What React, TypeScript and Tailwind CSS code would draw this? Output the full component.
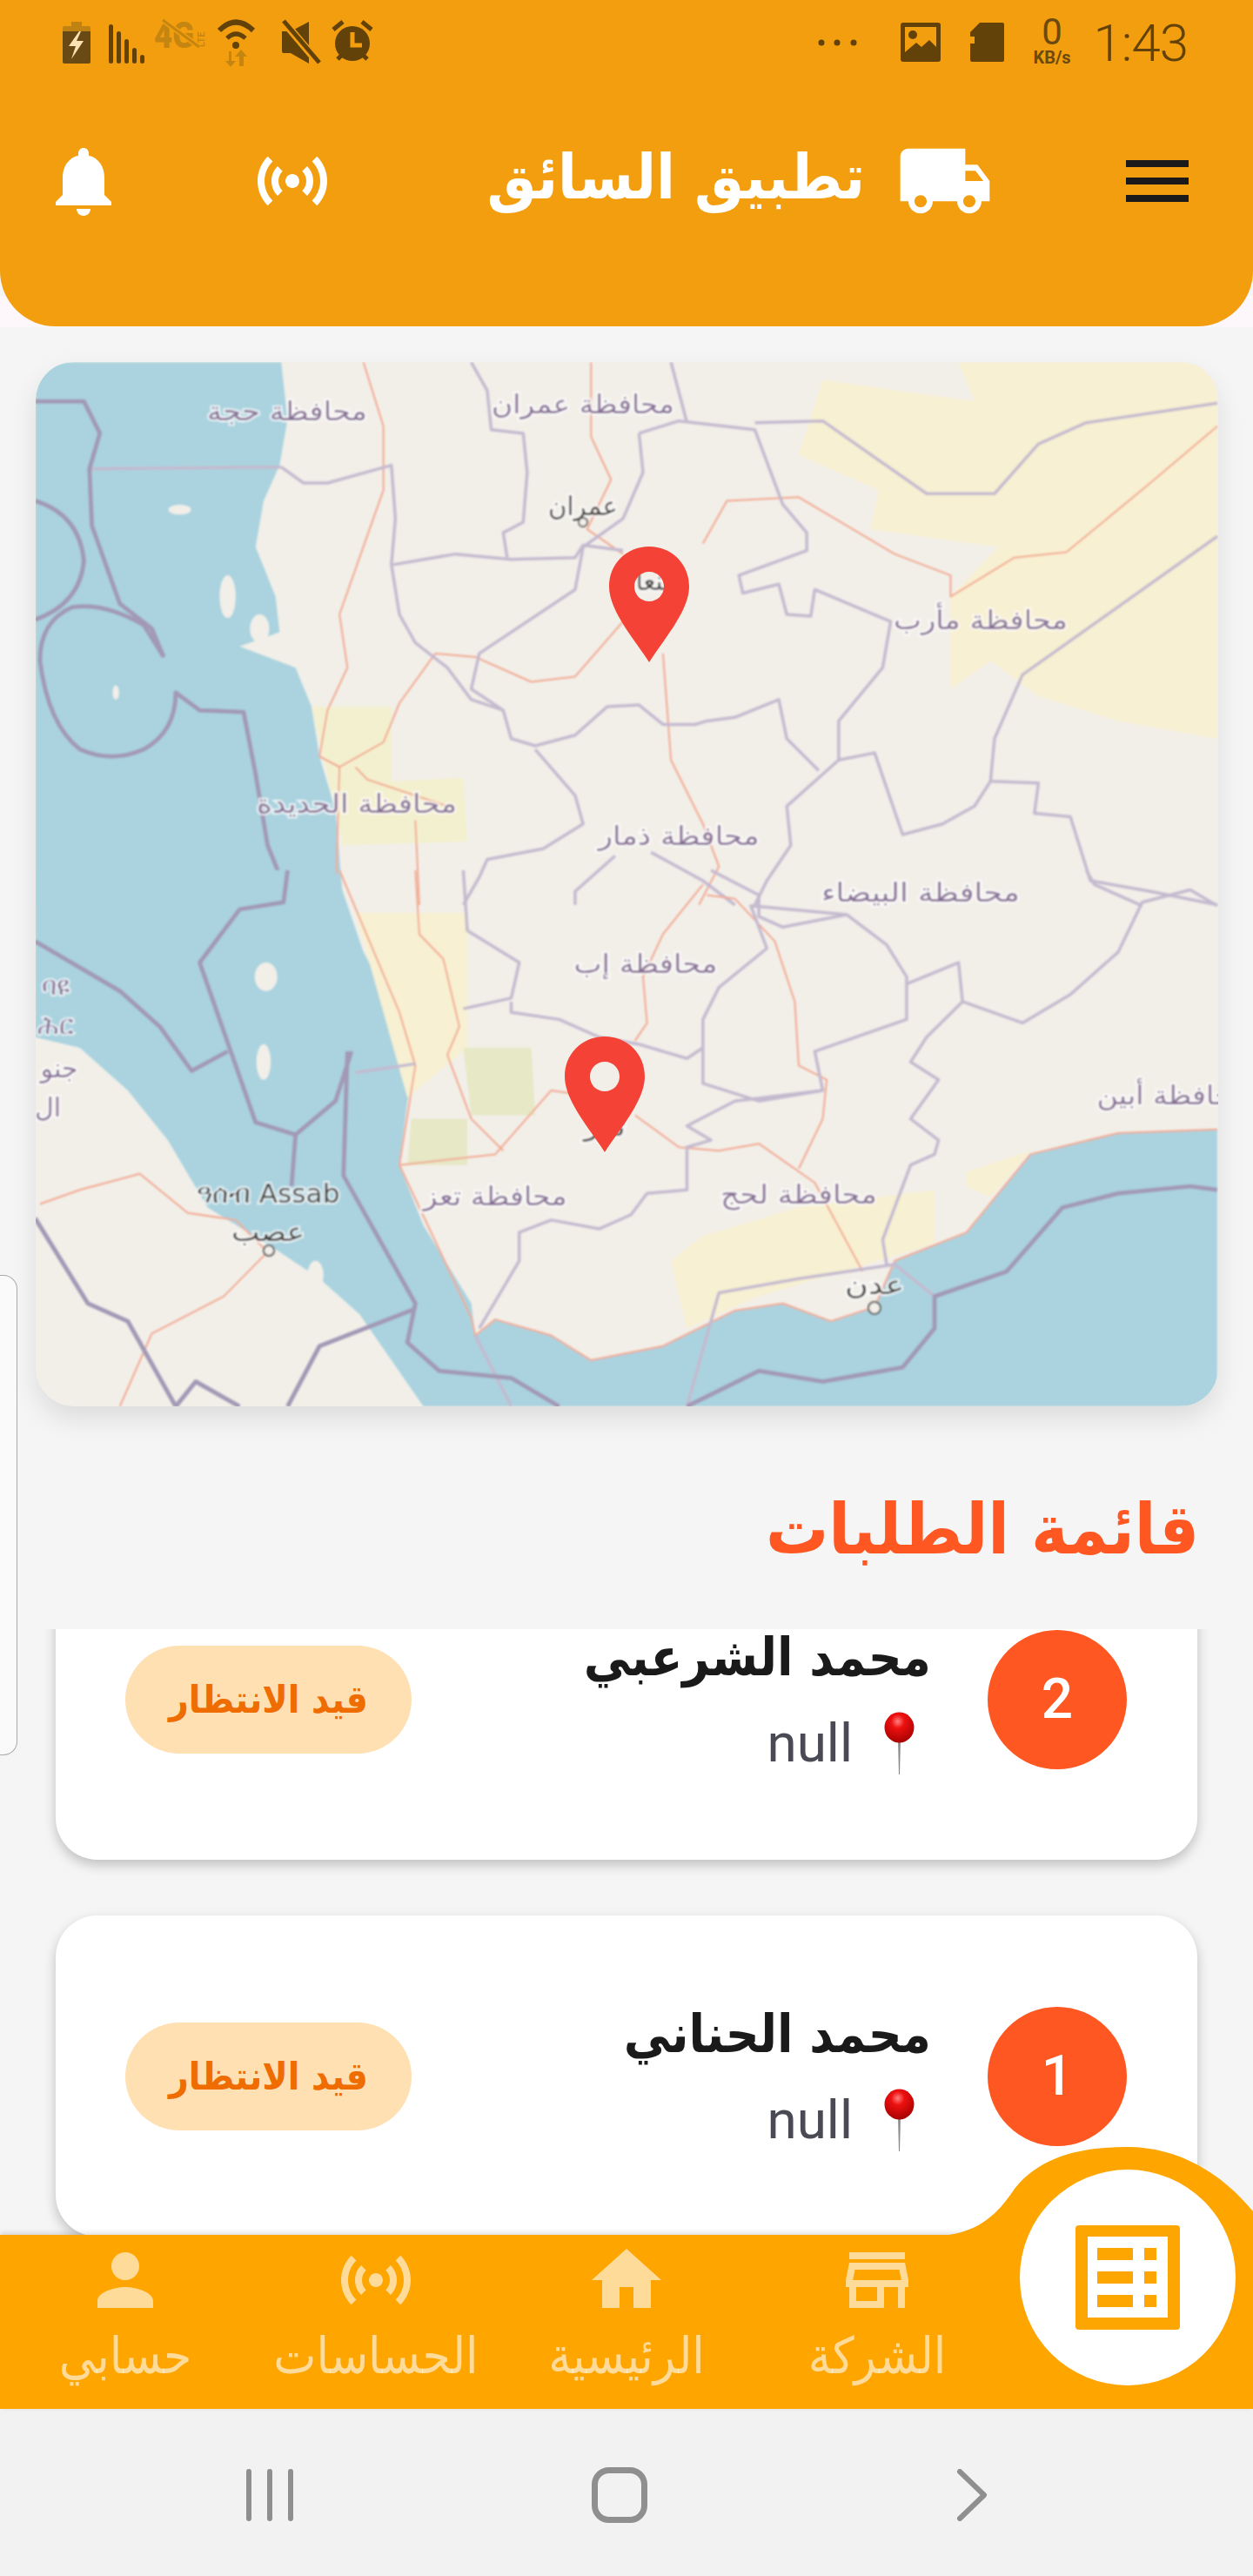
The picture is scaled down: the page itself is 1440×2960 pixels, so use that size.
import { ReactNode } from 'react';

const sensorsPath =
  'M7.76 16.24C6.67 15.16 6 13.66 6 12s.67-3.16 1.76-4.24l1.42 1.42C8.45 9.9 8 10.9 8 12c0 1.1.45 2.1 1.17 2.83l-1.41 1.41zm8.48 0C17.33 15.16 18 13.66 18 12s-.67-3.16-1.76-4.24l-1.42 1.42C15.55 9.9 16 10.9 16 12c0 1.1-.45 2.1-1.17 2.83l1.41 1.41zM12 10c-1.1 0-2 .9-2 2s.9 2 2 2 2-.9 2-2-.9-2-2-2zm8 2c0 2.21-.9 4.21-2.35 5.65l1.42 1.42C20.88 17.26 22 14.76 22 12s-1.12-5.26-2.93-7.07l-1.42 1.42C19.1 7.79 20 9.79 20 12zM6.35 6.35 4.93 4.93C3.12 6.74 2 9.24 2 12s1.12 5.26 2.93 7.07l1.42-1.42C4.9 16.21 4 14.21 4 12s.9-4.21 2.35-5.65z';

const Icon = ({ d, size = 96, className = '' }: { d: string; size?: number; className?: string }) => (
  <svg width={size} height={size} viewBox="0 0 24 24" fill="currentColor" className={className}>
    <path d={d} />
  </svg>
);

const StatusIcon = ({ w, children, className = '' }: { w: number; children: ReactNode; className?: string }) => (
  <svg width={w} height={56} viewBox={`0 0 ${w} 56`} className={`shrink-0 overflow-visible ${className}`}>
    {children}
  </svg>
);

const StatusBar = () => (
  <div className="flex items-start h-[80px] pt-[22px] text-[#63420a]">
    <div className="flex pl-[72px]">
      <StatusIcon w={32}>
        <path d="M10 3h12v5h8a2 2 0 0 1 2 2v4H0v-4a2 2 0 0 1 2-2h8z" fill="#c08213" />
        <path d="M0 14h32v35a2 2 0 0 1-2 2H2a2 2 0 0 1-2-2z" fill="#6a4a14" />
        <path d="M19 14 7 31h8l-5 15 14-21h-8l5-11z" fill="#fde2b4" />
      </StatusIcon>
      <StatusIcon w={41} className="ml-[21px]">
        <g fill="#63420a">
          <rect x="0" y="6" width="5" height="45" rx="2.5" />
          <rect x="9" y="14" width="5" height="37" rx="2.5" />
          <rect x="18" y="23" width="5" height="28" rx="2.5" />
          <rect x="27" y="33" width="5" height="18" rx="2.5" />
          <rect x="36" y="41" width="5" height="10" rx="2.5" />
        </g>
      </StatusIcon>
      <StatusIcon w={59} className="ml-[11px]">
        <g fill="#c58511">
          <text x="0" y="33" fontFamily="Roboto" fontWeight="900" fontSize="42" textLength="46" lengthAdjust="spacingAndGlyphs">4G</text>
          <text x="0" y="0" fontFamily="Roboto" fontWeight="500" fontSize="11" transform="translate(58 32) rotate(-90)">LTE</text>
        </g>
        <path d="M10 1 52 32" stroke="#f39e0e" strokeWidth="6" />
        <path d="M10 1 52 32" stroke="#c58511" strokeWidth="3" />
      </StatusIcon>
      <StatusIcon w={43} className="ml-[14px]">
        <path d="M2 13Q21-6 41 13" fill="none" stroke="#63420a" strokeWidth="6" />
        <path d="M11 22Q21 12 32 22" fill="none" stroke="#63420a" strokeWidth="5" />
        <circle cx="21" cy="30" r="4" fill="#63420a" />
        <path d="M13 37h3v11h5l-6 7-6-7h4zM27 35l7 8h-4v11h-5V43h-5z" fill="#c58511" />
      </StatusIcon>
      <StatusIcon w={44} className="ml-[31px]">
        <path d="M0 14h10L31 3v48L10 39H2a2 2 0 0 1-2-2z" fill="#63420a" />
        <path d="M3 4 41 49" stroke="#f39e0e" strokeWidth="9" />
        <path d="M2 2 43 50" stroke="#63420a" strokeWidth="5" />
      </StatusIcon>
      <StatusIcon w={50} className="ml-[12px]">
        <circle cx="25" cy="28" r="20" fill="#63420a" />
        <path d="M25 15v15h11" fill="none" stroke="#f39e0e" strokeWidth="5" />
        <path d="M3 12 14 3M47 12 36 3M8 46l5-5M42 46l-5-5" stroke="#63420a" strokeWidth="5" />
      </StatusIcon>
    </div>
    <div className="flex ml-auto pr-[75px]">
      <StatusIcon w={48}>
        <g fill="#63420a">
          <circle cx="6" cy="27" r="3.5" />
          <circle cx="24" cy="27" r="3.5" />
          <circle cx="43" cy="27" r="3.5" />
        </g>
      </StatusIcon>
      <StatusIcon w={46} className="ml-[49px]">
        <rect x="0" y="4" width="46" height="45" rx="3" fill="#63420a" />
        <path d="M5 9h36v23l-8-8-9 8-6-5-13 11z" fill="#f39e0e" />
        <circle cx="14" cy="18" r="5" fill="#63420a" />
      </StatusIcon>
      <StatusIcon w={39} className="ml-[34px]">
        <path d="M11 4h26a2 2 0 0 1 2 2v41a2 2 0 0 1-2 2H2a2 2 0 0 1-2-2V28h5v-8H0v-5z" fill="#63420a" />
      </StatusIcon>
      <div className="ml-[28px] w-[55px] flex flex-col items-center font-['Roboto'] text-[#6b4a0c] -mt-[2px]">
        <span className="text-[42px] leading-[34px]">0</span>
        <span className="text-[20px] leading-[20px] font-bold whitespace-nowrap mt-[2px]">KB/s</span>
      </div>
      <span className="ml-[20px] font-['Roboto'] font-light text-[60px] leading-[56px] tracking-[-1px] text-[#63420a]">1:43</span>
    </div>
  </div>
);

const Header = () => (
  <header className="h-[375px] shrink-0 bg-[#f39e0e] rounded-b-[64px] text-white">
    <StatusBar />
    <div className="relative h-[250px] pt-[80px] flex items-start pl-[48px]">
      <Icon d="M12 22c1.1 0 2-.9 2-2h-4c0 1.1.89 2 2 2zm6-6v-5c0-3.07-1.64-5.64-4.5-6.32V4c0-.83-.67-1.5-1.5-1.5s-1.5.67-1.5 1.5v.68C7.63 5.36 6 7.92 6 11v5l-2 2v1h16v-1l-2-2z" />
      <Icon d={sensorsPath} className="ml-[144px]" />
      <h1 className="ml-[170px] w-[440px] -mt-[4px] text-right text-[71px] leading-[96px] font-bold whitespace-nowrap" dir="rtl">
        تطبيق السائق
      </h1>
      <Icon d="M20 8h-3V4H3c-1.1 0-2 .9-2 2v11h2c0 1.66 1.34 3 3 3s3-1.34 3-3h6c0 1.66 1.34 3 3 3s3-1.34 3-3h2v-5l-3-4zM6 18.5c-.83 0-1.5-.67-1.5-1.5s.67-1.5 1.5-1.5 1.5.67 1.5 1.5-.67 1.5-1.5 1.5zm13.5-9l1.96 2.5H17V9.5h2.5zm-1.5 9c-.83 0-1.5-.67-1.5-1.5s.67-1.5 1.5-1.5 1.5.67 1.5 1.5-.67 1.5-1.5 1.5z" size={112} className="ml-[36px] -mt-[8px]" />
      <div className="ml-[152px] mt-[24px] w-[72px] flex flex-col gap-[12px]">
        <span className="h-[8px] bg-[#1a1a1a]" />
        <span className="h-[8px] bg-[#1a1a1a]" />
        <span className="h-[8px] bg-[#1a1a1a]" />
      </div>
    </div>
  </header>
);

// map lines are traced in two crops of the source, hence the two transforms
const northBorders = [
  'M352 335 380 380 410 380 490 330 495 480 490 610 500 750 520 830 560 900 590 990 630 1020 640 1100 670 1120 720 1090 760 1010 800 1005 830 1060 870 1060 885 1050 920 1040 975 990 985 1100 1025 1190',
  'M492 610 570 580 640 595 720 590 730 555 780 570',
  'M590 40 610 120 615 230 655 240 660 350 655 490 630 520 635 590',
  'M800 240 850 205 945 230 980 440 1010 520 1010 570 925 640 930 690 975 665 985 750 1015 755 1020 680 1115 770 1105 900 1050 1050 1050 1160 985 1290 990 1400 960 1500 945 1568',
  'M840 40 860 210',
  'M800 240 805 350 780 480 730 560 720 680 600 860 590 960 630 1020',
  'M945 210 1030 205 1160 410 1245 410 1300 270 1360 210 1524 155',
  'M1524 530 1280 920 1245 1100 1240 1220 1300 1225 1295 1310 1340 1320 1365 1500 1440 1530 1524 1568',
  'M1050 1160 1095 1140 1130 1370 1180 1340 1220 1290 1240 1220',
  'M670 1130 720 1260 730 1340 680 1410 610 1440 600 1490 580 1568',
  'M770 1430 720 1530 720 1568',
  'M815 1420 880 1500 920 1568',
  'M112 340 352 335',
];
const northSea = [
  'M44 150 105 150 125 240 112 340 115 500 150 720 190 790 205 870',
  'M44 430Q100 470 105 600 100 720 44 765',
  'M205 870 180 780Q130 715 90 730 50 770 50 880 60 1060 100 1130 140 1170 180 1130 220 1080 220 970L250 1020 305 1025 320 1200 335 1400 365 1568',
];
const northRoads = [
  'M455 40 480 220 480 400 425 750 435 900 410 1020 400 1150 425 1180 420 1568',
  'M740 40 740 250 765 370 735 510 780 580',
  'M880 550 910 430 1000 420 1120 580 1190 640 1190 700 1270 590 1335 575 1440 380 1524 220',
  'M545 860 595 870 665 940 720 925 780 770',
  'M545 860 500 1000 480 1110 425 1180 400 1150',
  'M445 1180 460 1215 560 1290',
  'M520 1330 525 1568',
  'M830 860 840 1160 880 1340 900 1460 875 1568',
];
const southBorders = [
  'M580 0 585 170 650 260 640 360 580 390',
  'M640 370 640 400 700 420 750 470 800 490 860 530 880 500 880 420 900 330 960 220 940 100 1060 125 1110 210 1135 300 1135 420 1020 510 1030 620 950 650 880 600 880 450',
  'M1030 620 920 650 860 720 890 760 860 780 860 900 810 910 790 970 750 1010 690 985 650 1020 650 1100 600 1290',
  'M1135 320 1200 260 1205 370 1280 430 1340 350 1400 230 1430 90 1490 55 1524 100',
  'M1430 100 1370 40 1360 0',
  'M1205 370 1160 470 1140 540 1175 590 1140 700 1175 760 1170 800 1140 830 1105 1040 1110 1110',
  'M890 0 950 70 950 130 980 160 1060 125',
  'M1170 1200 1120 1110 1000 1150 900 1190 860 1510',
  'M595 1310 640 1510',
  'M445 570 520 545',
];
const southSea = [
  'M360 0 355 90 300 110 250 260 320 710 370 745 420 650 440 510',
  'M435 510 430 860 520 1220 510 1330 550 1410 640 1430 700 1510',
  'M44 200 150 340 200 440 240 565 285 510',
  'M370 745 365 890',
  'M520 1235 400 1340 360 1510',
  'M44 980 110 1220 160 1270 220 1510',
  'M220 1510 245 1440 300 1510',
  'M860 1510 950 1410 1030 1440 1130 1400 1170 1290 1170 1200 1260 1130 1330 950 1400 910 1490 890 1524 900',
];
const southRoads = [
  'M880 40 830 180 805 300 810 430 795 480',
  'M885 70 920 80 970 200 995 370 1000 550 1035 590 1030 700 1000 840',
  'M795 690 850 780 900 790 950 770 1020 880 1080 1130',
  'M500 830 620 800 690 620 720 630',
  'M520 0 525 180 555 250 575 440 560 520 590 700 630 790',
  'M425 0 500 400 520 550 500 830 590 1260 595 1310',
  'M50 940 100 900 175 855 205 910 235 965 295 985 335 1075 280 1200 190 1305 150 1510',
  'M595 1310 620 1265 690 1310 740 1380 830 1340 920 1240 980 1220 1040 1270 1095 1230 1120 1100 1210 1020 1290 800 1400 740 1524 730',
];

const mapLabels = [
  { t: 'محافظة حجة', x: 330, y: 483, w: 184 },
  { t: 'محافظة عمران', x: 670, y: 475, w: 210 },
  { t: 'محافظة مأرب', x: 1127, y: 723, w: 200 },
  { t: 'محافظة الحديدة', x: 410, y: 934, w: 230 },
  { t: 'محافظة ذمار', x: 780, y: 971, w: 185 },
  { t: 'محافظة البيضاء', x: 1058, y: 1036, w: 228 },
  { t: 'محافظة إب', x: 742, y: 1118, w: 165 },
  { t: 'محافظة تعز', x: 569, y: 1385, w: 165 },
  { t: 'محافظة لحج', x: 918, y: 1383, w: 180 },
  { t: 'محافظة أبين', x: 1348, y: 1269, w: 175 },
];
const cityLabels = [
  { t: 'عمران', x: 670, y: 592, w: 80 },
  { t: 'عدن', x: 1005, y: 1487, w: 68 },
  { t: 'عصب', x: 308, y: 1426, w: 84 },
  { t: 'ዓሰብ Assab', x: 308, y: 1382, w: 165 },
  { t: 'صنعاء', x: 752, y: 678, w: 70 },
  { t: 'تعز', x: 695, y: 1305, w: 48 },
];

const Pin = ({ x, y }: { x: number; y: number }) => (
  <path
    transform={`translate(${x} ${y})`}
    fillRule="evenodd"
    fill="#f44336"
    d="M46 0C72 0 92 20 92 46 92 75 60 110 46 133 32 110 0 75 0 46 0 20 20 0 46 0ZM46 29C36 29 29 37 29 46S36 63 46 63 63 55 63 46 56 29 46 29Z"
  />
);

const Lines = ({ items, stroke, width }: { items: string[]; stroke: string; width: number }) => (
  <g fill="none" stroke={stroke} strokeWidth={width} strokeLinejoin="round">
    {items.map((d) => (
      <path key={d} d={d} vectorEffect="non-scaling-stroke" />
    ))}
  </g>
);

const MapPanel = () => (
  <section className="mt-[41px] ml-[41px] mr-[40px] h-[1200px] shrink-0 rounded-[44px] overflow-hidden bg-[#f2efe9] shadow-[0_14px_30px_rgba(0,0,0,0.1)]">
    <svg width="1359" height="1200" viewBox="41 416 1359 1200" className="block">
      <defs>
        <filter id="soft">
          <feGaussianBlur stdDeviation="1" />
        </filter>
      </defs>
      <g filter="url(#soft)">
        <g transform="translate(0 400) scale(.918 .408)">
          <path fill="#aad3df" d="M44 40H352L360 200 350 330 330 430 320 560 345 700 350 800 300 840 370 900 390 1010 400 1150 420 1300 430 1568H44Z" />
          <path fill="#f8f0d2" d="M1200 40 1220 150 1030 90 1000 300 1100 400 1090 510 1250 560 1190 700 1190 960 1240 880 1300 980 1400 1050 1524 1100V40Z" />
          <path fill="#f3f0cf" d="M390 1010H490V1220L580 1210 585 1390 430 1400Z" />
          <g fill="#f2efe9">
            <ellipse cx="225" cy="455" rx="14" ry="14" />
            <ellipse cx="285" cy="700" rx="10" ry="60" />
            <ellipse cx="325" cy="790" rx="12" ry="40" />
            <ellipse cx="145" cy="970" rx="4" ry="20" />
          </g>
          <Lines items={northRoads} stroke="#f2a78f" width={2} />
          <Lines items={northBorders} stroke="#c4bacf" width={3.5} />
          <Lines items={northSea} stroke="#a299b6" width={5} />
        </g>
        <g transform="translate(0 1000) scale(.918 .408)">
          <path fill="#aad3df" d="M44 0H420L455 230 500 420 520 550 510 650 500 830 530 1000 590 1220 595 1310 620 1265 690 1310 740 1380 830 1340 920 1240 980 1220 1040 1270 1095 1230 1120 1100 1210 1020 1290 800 1400 740 1524 730V1510H530L450 1250 400 1150 340 1060 260 950 210 760 160 620 100 500 44 470Z" />
          <path fill="#f8f0d2" d="M445 120H585V500L510 640ZM840 1100 880 1030 1000 950 1170 900 1170 1050 1100 1100 950 1200 860 1290ZM1210 850 1290 790 1240 920 1210 890Z" />
          <path fill="#e6e8c6" d="M580 500H665L670 690 590 690ZM515 700H585V830H510Z" />
          <g fill="#f2efe9">
            <ellipse cx="333" cy="300" rx="14" ry="40" />
            <ellipse cx="330" cy="540" rx="9" ry="50" />
            <ellipse cx="395" cy="1140" rx="10" ry="40" />
          </g>
          <Lines items={southRoads} stroke="#f2a78f" width={2} />
          <Lines items={southBorders} stroke="#c4bacf" width={3.5} />
          <Lines items={southSea} stroke="#a299b6" width={5} />
        </g>
        <g fontFamily="'DejaVu Sans', sans-serif" fontSize="30" textAnchor="middle" paintOrder="stroke" stroke="#ffffff" strokeOpacity="0.75" strokeWidth="4">
          {mapLabels.map((l) => (
            <text key={l.t} x={l.x} y={l.y} textLength={l.w} lengthAdjust="spacingAndGlyphs" fill="#866e94">
              {l.t}
            </text>
          ))}
          {cityLabels.map((l) => (
            <text key={l.t} x={l.x} y={l.y} textLength={l.w} lengthAdjust="spacingAndGlyphs" fill="#3c3a3a">
              {l.t}
            </text>
          ))}
          <text x="64" y="1143" fill="#866e94">ባዩ</text>
          <text x="64" y="1188" fill="#866e94">ሕር</text>
          <text x="68" y="1238" fill="#866e94">جنو</text>
          <text x="55" y="1283" fill="#866e94">ال</text>
        </g>
        <g fill="#f2efe9" stroke="#555" strokeWidth="2">
          <circle cx="670" cy="600" r="5" />
          <circle cx="1005" cy="1503" r="7" />
          <circle cx="309" cy="1437" r="6" />
        </g>
      </g>
      <Pin x={700} y={628} />
      <Pin x={649} y={1191} />
    </svg>
  </section>
);

const PushPin = () => (
  <svg width="37" height="72" viewBox="0 0 37 72" className="shrink-0">
    <defs>
      <radialGradient id="ball" cx="0.45" cy="0.3" r="0.75">
        <stop offset="0" stopColor="#ff8080" />
        <stop offset="0.3" stopColor="#ee1010" />
        <stop offset="1" stopColor="#a00000" />
      </radialGradient>
    </defs>
    <path d="M17 30h3l-1 42h-1z" fill="#8a8a8a" />
    <ellipse cx="18.5" cy="18" rx="17" ry="17.5" fill="url(#ball)" />
  </svg>
);

const OrderCard = ({ index, name }: { index: number; name: string }) => (
  <article className="mx-[64px] h-[369px] shrink-0 rounded-[48px] bg-white shadow-[0_6px_14px_rgba(0,0,0,0.22)] flex items-center pl-[80px] pr-[81px]">
    <span className="w-[329px] h-[124px] rounded-full bg-[#ffe0b2] flex items-center justify-center text-[#ef6c00] text-[44px] font-bold">
      قيد الانتظار
    </span>
    <div className="ml-auto mr-[65px] flex flex-col items-end -mt-[3px]">
      <h3 className="text-[#1a1a1a] text-[60px] leading-[80px] font-bold whitespace-nowrap">{name}</h3>
      <p className="flex items-center gap-[35px] mt-[23px] mr-[18px] text-[#4a4a55] font-['Roboto'] text-[62px] leading-[72px]">
        null
        <PushPin />
      </p>
    </div>
    <span className="w-[160px] h-[160px] rounded-full bg-[#ff5722] flex items-center justify-center text-white font-['Roboto'] font-medium text-[64px]">
      {index}
    </span>
  </article>
);

const BottomNav = () => {
  const items = [
    {
      label: 'حسابي',
      d: 'M12 12c2.21 0 4-1.79 4-4s-1.79-4-4-4-4 1.79-4 4 1.79 4 4 4zm0 2c-2.67 0-8 1.34-8 4v2h16v-2c0-2.66-5.33-4-8-4z',
    },
    { label: 'الحساسات', d: sensorsPath },
    { label: 'الرئيسية', d: 'M10 20v-6h4v6h5v-8h3L12 3 2 12h3v8z' },
    {
      label: 'الشركة',
      d: 'M18.36 9l.6 3H5.04l.6-3h12.72M20 4H4v2h16V4zm0 3H4l-1 5v2h1v6h10v-6h4v6h2v-6h1v-2l-1-5zM6 18v-4h6v4H6z',
    },
  ];

  return (
    <nav className="relative h-[200px] shrink-0 bg-[#ffa500] grid grid-cols-5 text-white/60 shadow-[0_-2px_6px_rgba(0,0,0,0.15)]">
      {items.map((item) => (
        <div key={item.label} className="flex flex-col items-center pt-[4px]">
          <Icon d={item.d} />
          <span className="text-[58px] leading-[70px] mt-[4px] whitespace-nowrap">{item.label}</span>
        </div>
      ))}
      <svg width="366" height="102" viewBox="0 0 366 102" className="absolute right-0 -top-[101px]">
        <path d="M0 102C52 102 76 72 92 48 122 10 170 0 222 0 280 0 330 30 366 74V102Z" fill="#ffa500" />
      </svg>
      <div className="absolute left-[1172px] -top-[75px] w-[248px] h-[248px] rounded-full bg-white flex items-center justify-center">
        <svg width="120" height="120" viewBox="0 0 120 120">
          <rect width="120" height="120" rx="4" fill="#fda500" />
          <rect x="14" y="13" width="92" height="93" fill="#fff" />
          <g fill="#fda500">
            <rect x="25" y="26" width="41" height="14" />
            <rect x="79" y="26" width="14" height="14" />
            <rect x="25" y="53" width="41" height="14" />
            <rect x="79" y="53" width="14" height="14" />
            <rect x="25" y="80" width="41" height="14" />
            <rect x="79" y="80" width="14" height="14" />
          </g>
        </svg>
      </div>
    </nav>
  );
};

const SystemNav = () => (
  <div className="h-[192px] shrink-0 bg-[#f2f2f2] flex items-center pl-[283px] pt-[6px]">
    <div className="flex gap-[18px]">
      <span className="w-[6px] h-[60px] rounded-full bg-[#8f8f8f]" />
      <span className="w-[6px] h-[60px] rounded-full bg-[#8f8f8f]" />
      <span className="w-[6px] h-[60px] rounded-full bg-[#8f8f8f]" />
    </div>
    <span className="ml-[343px] w-[64px] h-[64px] rounded-[20px] border-[7px] border-[#8f8f8f]" />
    <svg width="36" height="60" viewBox="0 0 36 60" className="ml-[355px]">
      <path d="M4 3 32 30 4 57" fill="none" stroke="#8f8f8f" strokeWidth="6" strokeLinecap="round" strokeLinejoin="round" />
    </svg>
  </div>
);

export default function App() {
  return (
    <div className="relative w-[1440px] h-[2960px] overflow-hidden flex flex-col bg-[#f5f5f5] font-['DejaVu_Sans_Condensed','DejaVu_Sans',sans-serif]">
      <div className="absolute top-[340px] inset-x-0 h-[36px] bg-[#fdf6fb]" />
      <div className="relative flex flex-col flex-1">
        <Header />
        <MapPanel />
        <h2 className="mt-[92px] h-[164px] shrink-0 pr-[62px] text-right text-[#ff5722] text-[80px] leading-[100px] font-bold" dir="rtl">
          قائمة الطلبات
        </h2>
        <div className="h-[696px] shrink-0 overflow-hidden flex flex-col gap-[64px]">
          <div className="-mt-[168px]" />
          <OrderCard index={2} name="محمد الشرعبي" />
          <OrderCard index={1} name="محمد الحناني" />
        </div>
        <BottomNav />
        <SystemNav />
      </div>
      {/* edge panel handle */}
      <div className="absolute left-0 top-[1465px] w-[20px] h-[552px] rounded-r-[16px] border border-l-0 border-[#aaaaaa] bg-[#fafafa]" />
    </div>
  );
}
